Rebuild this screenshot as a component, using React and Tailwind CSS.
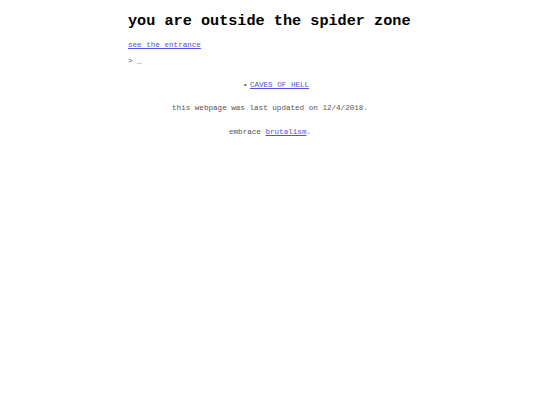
export default function App() {
  return (
    <div className="min-h-[405px] bg-white" style={{ fontFamily: '"Liberation Mono", "Courier New", monospace' }}>
      <div className="mx-auto w-[284px] pt-[12px] text-[7.6px] leading-[10px] text-[#555555]">
        <h1 className="text-[15.2px] leading-[18px] font-bold whitespace-nowrap text-black">you are outside the spider zone</h1>
        <p className="mt-[10px]">
          <a href="#" className="text-[#5252e6] underline">see the entrance</a>
        </p>
        <p className="mt-[6px]">&gt; _</p>
        <div className="mt-[14px] pl-[19px] text-center">
          <span className="relative inline-block">
            <span className="absolute left-[-7px] top-0">•</span>
            <a href="#" className="text-[#5252e6] underline">CAVES OF HELL</a>
          </span>
        </div>
        <p className="mt-[13px] text-center">this webpage was last updated on 12/4/2018.</p>
        <p className="mt-[14px] text-center">
          embrace <a href="#" className="text-[#5252e6] underline">brutalism</a>.
        </p>
      </div>
    </div>
  );
}
